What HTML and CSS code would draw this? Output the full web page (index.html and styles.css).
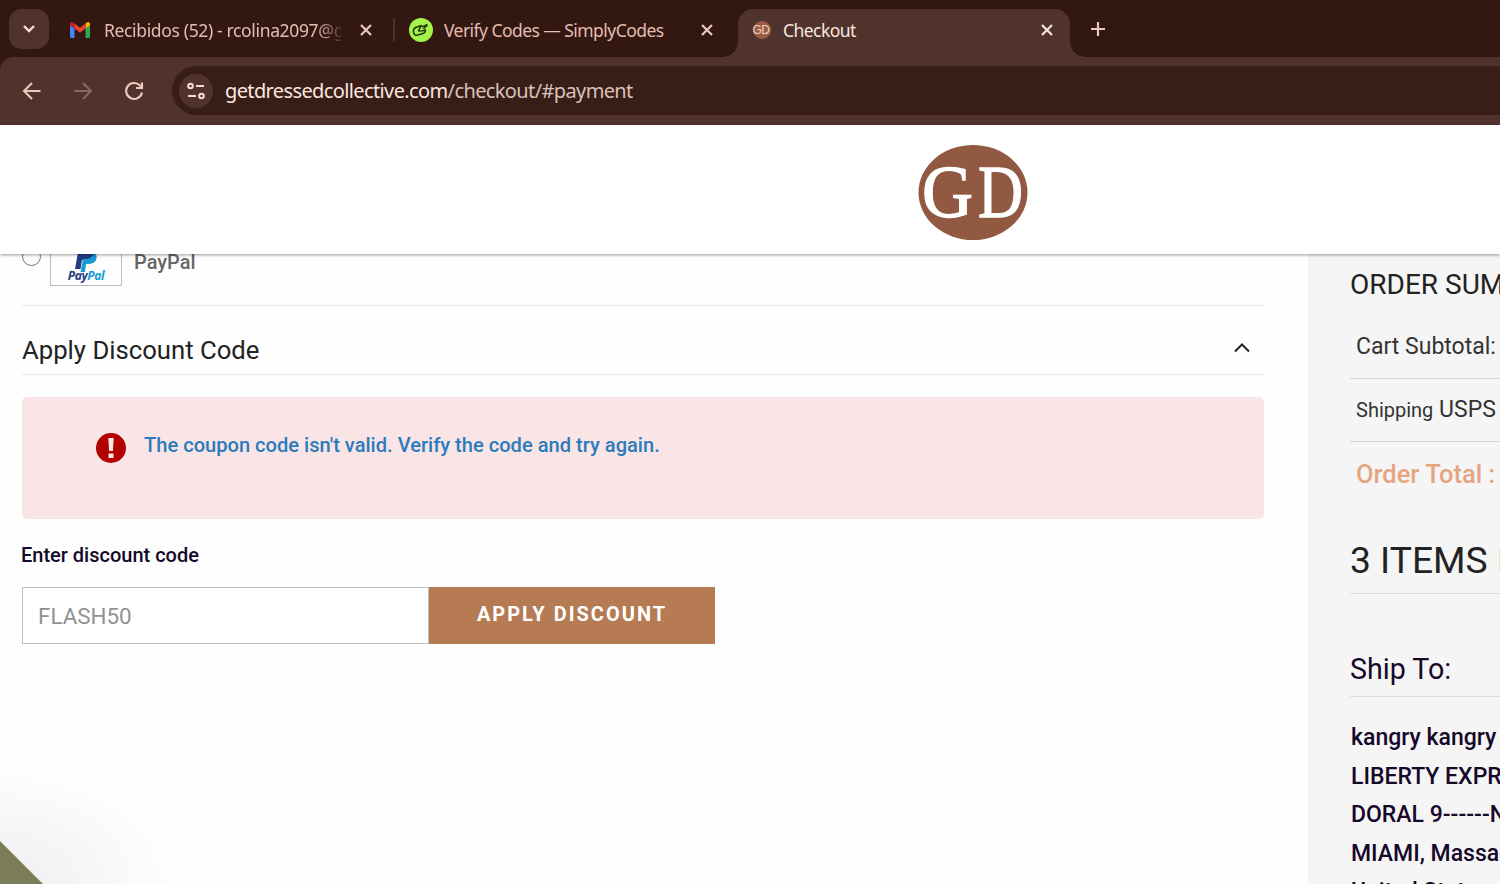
FILE: index.html
```html
<!DOCTYPE html>
<html lang="en">

<head>
    <meta charset="UTF-8">
    <title>Checkout</title>
    <link rel="stylesheet" href="styles.css">
</head>

<body>
    <!-- Browser window -->
    <div class="browser">
        <div class="tab-strip">
            <button class="tab-search" type="button" aria-label="Search tabs">
                <svg width="14" height="10" viewBox="0 0 14 10"><path d="M2 2l5 5 5-5" /></svg>
            </button>
            <div class="tab tab-mail">
                <svg class="favicon" width="20" height="16" viewBox="0 0 20 16">
                    <path fill="#4285f4" d="M0 3l4.5 3.4V16H1.4Q0 16 0 14.6z" />
                    <path fill="#34a853" d="M20 3l-4.5 3.4V16h3.1q1.4 0 1.4-1.4z" />
                    <path fill="#c5221f" d="M0 2.5Q.3-.8 3 .4L4.5 1.6v5L0 3.2z" />
                    <path fill="#fbbc04" d="M20 2.5Q19.7-.8 17 .4l-1.5 1.2v5L20 3.2z" />
                    <path fill="#ea4335" d="M4.5 1.5L10 5.7l5.5-4.2v5L10 10.7 4.5 6.5z" />
                </svg>
                <span class="tab-title fade">Recibidos (52) - rcolina2097@gmail.com</span>
                <svg class="close" width="12" height="12" viewBox="0 0 12 12"><path d="M1 1l10 10M11 1L1 11" /></svg>
            </div>
            <div class="tab tab-codes">
                <svg class="favicon" width="24" height="24" viewBox="0 0 24 24">
                    <circle cx="12" cy="12" r="12" fill="#a4f34b" />
                    <g fill="none" stroke="#26380f" stroke-width="1.5" stroke-linejoin="round">
                        <path d="M12.500 7.500L6.500 9.500Q4 11 4.500 14q.5 3.500 3.500 3.200l6-1.700q2.500-1 2.500-3.500l-3 .8-4 .2 1-2.500z" />
                        <path d="M13 9l5.500-2.500M14.500 11l4-4" />
                    </g>
                </svg>
                <span class="tab-title">Verify Codes — SimplyCodes</span>
                <svg class="close" width="12" height="12" viewBox="0 0 12 12"><path d="M1 1l10 10M11 1L1 11" /></svg>
            </div>
            <div class="tab tab-active">
                <span class="gd-icon">GD</span>
                <span class="tab-title">Checkout</span>
                <svg class="close" width="12" height="12" viewBox="0 0 12 12"><path d="M1 1l10 10M11 1L1 11" /></svg>
            </div>
            <svg class="new-tab" width="16" height="16" viewBox="0 0 16 16"><path d="M8 1v14M1 8h14" /></svg>
        </div>

        <div class="toolbar">
            <svg class="nav" width="20" height="20" viewBox="0 0 20 20"><path d="M18.5 10H2M10 2l-8 8 8 8" /></svg>
            <svg class="nav disabled" width="20" height="20" viewBox="0 0 20 20"><path d="M1.5 10H18M10 2l8 8-8 8" /></svg>
            <svg class="nav" width="20" height="20" viewBox="0 0 20 20"><path d="M18 11.5a8 8 0 1 1-2-7l2 2M18 1.500V7h-6" /></svg>
            <div class="address-bar">
                <span class="site-info">
                    <svg width="20" height="18" viewBox="0 0 20 18">
                        <circle cx="4.5" cy="4" r="2.3" /><path d="M10 4h8" />
                        <circle cx="15.5" cy="14" r="2.3" /><path d="M2 14h8" />
                    </svg>
                </span>
                <span class="url"><b>getdressedcollective.com</b>/checkout/#payment</span>
            </div>
        </div>
    </div>

    <!-- Store header -->
    <header class="site-header">
        <svg class="logo" width="110" height="96" viewBox="0 0 110 96">
            <ellipse cx="55" cy="47.5" rx="54.5" ry="47.5" />
            <text x="4" y="72" textLength="51" lengthAdjust="spacingAndGlyphs">G</text>
            <text x="60" y="72" textLength="45" lengthAdjust="spacingAndGlyphs">D</text>
        </svg>
    </header>

    <div class="page">
        <main class="payment">
            <div class="method">
                <span class="radio"></span>
                <span class="paypal-card">
                    <svg width="22" height="26" viewBox="0 0 22 26">
                        <path fill="#253b80" d="M4 0h9q7 1 6 7-1 6-8 6H7L5.5 22H0z" />
                        <path fill="#179bd7" d="M8 12h4q6-1 7-7 4 3 2 8-2 4-8 4h-2l-1 8H5.5z" />
                    </svg>
                    <span class="paypal-name">Pay<i>Pal</i></span>
                </span>
                <span class="method-name">PayPal</span>
            </div>

            <div class="discount-title">
                <span>Apply Discount Code</span>
                <svg width="16" height="10" viewBox="0 0 16 10"><path d="M1 8.5l7-7 7 7" /></svg>
            </div>

            <div class="error-message">
                <svg width="30" height="30" viewBox="0 0 30 30">
                    <circle cx="15" cy="15" r="15" fill="#b30000" />
                    <path fill="#f9e5e5" d="M12.3 5h5.4l-.8 13h-3.800zM12.500 20.500h5V25h-5z" />
                </svg>
                <span>The coupon code isn't valid. Verify the code and try again.</span>
            </div>

            <!-- Coupon form -->
            <form class="discount-form">
                <label for="discount-code">Enter discount code</label>
                <div class="discount-row">
                    <input type="text" id="discount-code" value="FLASH50">
                    <button type="button">APPLY DISCOUNT</button>
                </div>
            </form>
        </main>

        <aside class="summary">
            <h2>ORDER SUMMARY</h2>
            <div class="total-row subtotal">Cart Subtotal:</div>
            <div class="total-row shipping"><small>Shipping</small> USPS</div>
            <div class="total-row grand-total">Order Total <span>:</span></div>
            <h3>3 ITEMS IN CART</h3>
            <h4>Ship To:</h4>
            <div class="address">
                kangry kangry<br>
                LIBERTY EXPRESS<br>
                DORAL 9------N<br>
                MIAMI, Massachusetts<br>
                United States
            </div>
        </aside>
    </div>
    <div class="corner-glow"></div>
    <div class="corner"></div>
</body>

</html>
```
FILE: styles.css
```css
* {
    box-sizing: border-box;
}

body {
    margin: 0;
    height: 884px;
    overflow: hidden;
    position: relative;
    display: flex;
    flex-direction: column;
    background-color: #fefefe;
    font-family: Roboto, "Liberation Sans", sans-serif;
}

svg {
    display: block;
    flex: none;
}

/* Browser */
.browser {
    flex: none;
    height: 125px;
    background-color: #321811;
    font-family: "Noto Sans", "Open Sans", sans-serif;
}

.tab-strip {
    height: 57px;
    display: flex;
    align-items: flex-start;
    padding: 9px 0 0 9px;
}

.tab-search {
    width: 40px;
    height: 40px;
    padding: 0;
    border: none;
    border-radius: 13px;
    background-color: #50332c;
    display: flex;
    align-items: center;
    justify-content: center;
}

.tab-search path {
    fill: none;
    stroke: #f8ddd6;
    stroke-width: 2.4;
}

.tab {
    height: 41px;
    display: flex;
    align-items: center;
    color: #e6bdb3;
    font-size: 17.5px;
    white-space: nowrap;
}

.tab-title {
    flex: 1;
    min-width: 0;
    overflow: hidden;
    letter-spacing: -0.55px;
}

.tab-mail {
    width: 324px;
    margin-left: 21px;
    gap: 14px;
}

.tab-mail .tab-title {
    flex: none;
    width: 237px;
    letter-spacing: -0.35px;
}

.tab-mail .close {
    margin-left: 5px;
}

.fade {
    -webkit-mask-image: linear-gradient(to right, #000 212px, transparent 242px);
    mask-image: linear-gradient(to right, #000 212px, transparent 242px);
}

.tab-codes {
    width: 321px;
    gap: 11px;
    padding-left: 16px;
    background: linear-gradient(#50332c, #50332c) 0 9px / 2px 23px no-repeat;
    margin-left: -1px;
}

.tab-codes .close {
    margin-right: 1px;
}

.close path,
.new-tab path {
    fill: none;
    stroke: #ecc9c0;
    stroke-width: 2.2;
}

.tab-active {
    width: 332px;
    height: 48px;
    margin-left: 24px;
    padding: 0 17px 7px 15px;
    gap: 12px;
    border-radius: 15px 15px 0 0;
    background-color: #50332c;
    color: #fbe6e0;
    position: relative;
}

/* Curved feet of the selected tab */
.tab-active::before,
.tab-active::after {
    content: "";
    position: absolute;
    bottom: 0;
    width: 15px;
    height: 15px;
}

.tab-active::before {
    right: 100%;
    background: radial-gradient(circle at 0 0, transparent 14.5px, #50332c 15px);
}

.tab-active::after {
    left: 100%;
    background: radial-gradient(circle at 100% 0, transparent 14.5px, #50332c 15px);
}

.tab-active .close path {
    stroke: #fbe6e0;
}

.gd-icon {
    width: 18px;
    height: 18px;
    border-radius: 50%;
    background-color: #9b5c43;
    color: #ecd3c8;
    font-family: "Liberation Sans", sans-serif;
    font-size: 12px;
    line-height: 18px;
    letter-spacing: -0.6px;
    text-indent: -0.5px;
}

.new-tab {
    margin: 12px 0 0 20px;
}

.toolbar {
    height: 68px;
    display: flex;
    align-items: center;
    padding: 0 0 1px 22px;
    gap: 31px;
    background-color: #50332c;
    border-radius: 13px 0 0 0;
}

.nav path {
    fill: none;
    stroke: #f0c8bd;
    stroke-width: 2.1;
}

.nav.disabled path {
    stroke: #8b665d;
}

.address-bar {
    flex: 1;
    height: 49px;
    display: flex;
    align-items: center;
    gap: 12px;
    margin-left: -3px;
    padding-left: 7px;
    border-radius: 25px 0 0 25px;
    background-color: #391e17;
}

.site-info {
    width: 34px;
    height: 34px;
    border-radius: 50%;
    background-color: #50332c;
    display: flex;
    align-items: center;
    justify-content: center;
}

.site-info svg {
    fill: none;
    stroke: #f8ddd6;
    stroke-width: 2;
}

.url {
    color: #d9c1ba;
    font-size: 20px;
    letter-spacing: -0.62px;
}

.url b {
    font-weight: normal;
    color: #fbe6e0;
}

/* Store header */
.site-header {
    flex: none;
    height: 129px;
    padding: 20px 0 0 918px;
    background-color: #fff;
    box-shadow: 0 1px 3px rgba(0, 0, 0, 0.4);
    position: relative;
    z-index: 2;
}

.logo ellipse {
    fill: #915942;
}

.logo text {
    fill: #fff;
    stroke: #fff;
    stroke-width: 1.3;
    font-family: "Liberation Serif", serif;
    font-size: 74px;
}

.page {
    flex: 1;
    min-height: 0;
    display: flex;
}

.payment {
    width: 1308px;
    padding: 0 44px 0 22px;
}

/* The payment row is partly scrolled under the header */
.method {
    height: 80px;
    margin-top: -28px;
    padding-bottom: 19px;
    display: flex;
    align-items: flex-end;
    border-bottom: 1px solid #e8e8e8;
}

.radio {
    width: 19px;
    height: 19px;
    margin-bottom: 20px;
    border: 1.5px solid #767676;
    border-radius: 50%;
}

.paypal-card {
    width: 72px;
    height: 48px;
    margin: 0 12px 0 9px;
    border: 1px solid #bbb;
    display: flex;
    flex-direction: column;
    align-items: center;
    justify-content: flex-end;
}

.paypal-card svg {
    margin-bottom: -3px;
}

.paypal-name {
    color: #253b80;
    font: italic bold 12px/12px "Open Sans", sans-serif;
    letter-spacing: -0.4px;
    margin-bottom: 3px;
}

.paypal-name i {
    color: #179bd7;
}

.method-name {
    color: #666;
    font-size: 20px;
    font-weight: 500;
    line-height: 24px;
    margin-bottom: 12px;
}

.discount-title {
    height: 69px;
    padding: 19px 14px 0 0;
    display: flex;
    align-items: center;
    justify-content: space-between;
    border-bottom: 1px solid #e8e8e8;
    color: #222;
    font-size: 25.7px;
}

.discount-title svg {
    margin-bottom: 3px;
}

.discount-title path {
    fill: none;
    stroke: #222;
    stroke-width: 2;
}

.error-message {
    height: 122px;
    margin-top: 22px;
    padding: 36px 0 0 74px;
    display: flex;
    gap: 18px;
    border-radius: 5px;
    background-color: #f9e5e5;
    color: #2b7bbd;
    font-size: 20.1px;
    font-weight: 500;
    line-height: 24px;
}

.discount-form label {
    display: block;
    margin: 24px 0 20px -1px;
    color: #150829;
    font-size: 20px;
    font-weight: 500;
    line-height: 24px;
}

.discount-row {
    display: flex;
}

.discount-row input {
    width: 407px;
    height: 57px;
    padding: 1px 15px 0;
    border: 1px solid #bfbfbf;
    border-radius: 0;
    outline: none;
    color: #929292;
    background-color: #fff;
    font: 22.4px Roboto, sans-serif;
}

.discount-row button {
    width: 286px;
    height: 57px;
    padding: 0 0 3px;
    border: none;
    background-color: #b67b53;
    color: #fff;
    font: bold 20px Roboto, sans-serif;
    letter-spacing: 2px;
    cursor: pointer;
}

/* Order summary */
.summary {
    flex: 1;
    min-width: 0;
    padding: 14px 0 0 42px;
    background-color: #f5f5f5;
    white-space: nowrap;
    overflow: hidden;
}

.summary h2,
.summary h3,
.summary h4 {
    margin: 0;
    font-weight: normal;
    color: #222;
}

.summary h2 {
    height: 46px;
    font-size: 28px;
    line-height: 33px;
}

.total-row {
    height: 63px;
    padding-left: 6px;
    border-bottom: 1px solid #d5d5d5;
    color: #333;
    font-size: 23px;
    line-height: 62px;
}

.subtotal {
    height: 65px;
    line-height: 65px;
}

.total-row small {
    font-size: 20px;
}

.grand-total {
    border: none;
    color: #e5a583;
    font-size: 25.5px;
    font-weight: 500;
    line-height: 64px;
}

.summary h3 {
    height: 89px;
    padding-top: 31px;
    border-bottom: 1px solid #ddd;
    font-size: 37.2px;
    line-height: 48px;
}

.summary h4 {
    height: 103px;
    padding-top: 57px;
    border-bottom: 1px solid #ddd;
    color: #150829;
    font-size: 28.6px;
    line-height: 36px;
}

.address {
    padding: 22px 0 0 1px;
    color: #150829;
    font-size: 23px;
    font-weight: 500;
    line-height: 38.6px;
}

/* Corner badge */
.corner {
    position: absolute;
    left: 0;
    bottom: 0;
    width: 43px;
    height: 43px;
    background-color: #7b7e59;
    clip-path: polygon(0 0, 100% 100%, 0 100%);
}

.corner-glow {
    position: absolute;
    left: 0;
    bottom: 0;
    width: 180px;
    height: 120px;
    background: radial-gradient(ellipse at 0 100%, rgba(0, 0, 0, 0.06), rgba(0, 0, 0, 0.03) 35%, transparent 70%);
}
```
